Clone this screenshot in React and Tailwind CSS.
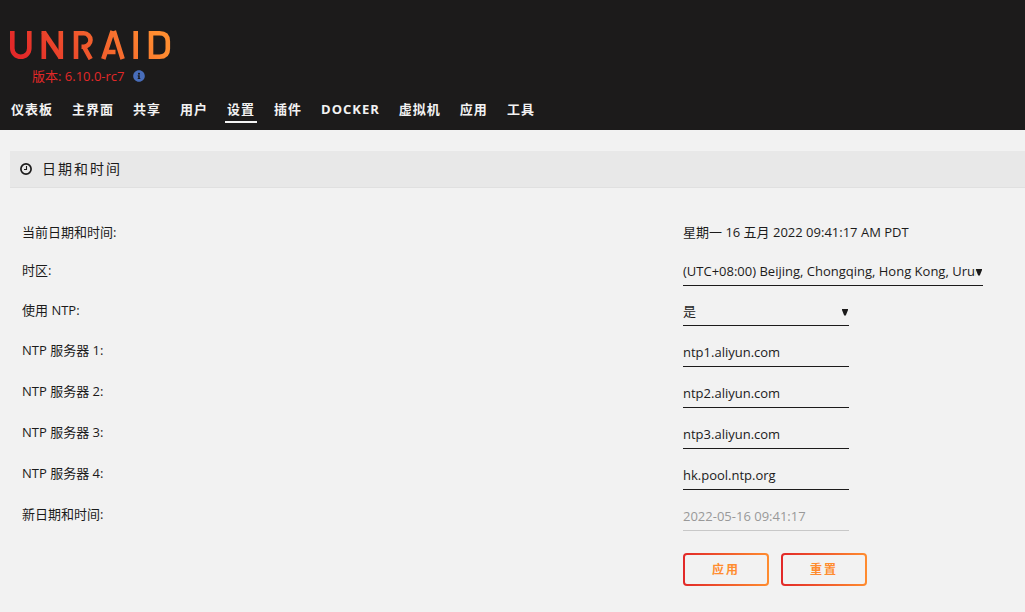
import { FaInfoCircle } from 'react-icons/fa';

const tabs = ['仪表板', '主界面', '共享', '用户', '设置', '插件', 'DOCKER', '虚拟机', '应用', '工具'];

const servers = ['ntp1.aliyun.com', 'ntp2.aliyun.com', 'ntp3.aliyun.com', 'hk.pool.ntp.org'];

const fieldClass = 'block h-[30px] border-b border-[#1c1b1b] bg-transparent text-[13px] outline-none';

function Logo() {
  return (
    <svg width="164" height="30" viewBox="0 0 164 30" fill="none" role="img" aria-label="Unraid">
      <defs>
        <linearGradient id="brand" gradientUnits="userSpaceOnUse" x1="30" y1="50" x2="130" y2="-20">
          <stop offset="0" stopColor="#e32929" />
          <stop offset="1" stopColor="#ff8d30" />
        </linearGradient>
      </defs>
      <g stroke="url(#brand)" strokeWidth="4.6">
        <path d="M3.3 1v17.3a8.5 8.5 0 0 0 17 0V1" />
        <path d="M34.8 29V1M51.8 1v28" />
        <path d="M34.6 2.2L52 27.8" strokeWidth="5" />
        <path d="M67 29V3.3h7.8a6.7 6.7 0 0 1 0 13.4h-2.3M74.5 16L81.7 29" />
        <path d="M94.3 29L103.6 1M113.6 29L104.8 1M97.5 22h9" />
        <path d="M126.7 1v28" />
        <path d="M142 3.3h8.5q8.3 0 8.3 8v7.4q0 8-8.3 8H142z" />
      </g>
    </svg>
  );
}

function ClockIcon() {
  return (
    <svg width="12" height="12" viewBox="0 0 12 12" fill="none" stroke="#1c1b1b" aria-hidden="true">
      <circle cx="6" cy="6" r="5.1" strokeWidth="1.7" />
      <path d="M6.5 3v3.5H4" strokeWidth="1.1" />
    </svg>
  );
}

function Row({ label, id, tall, children }) {
  return (
    <div className={`flex items-end ${tall ? 'h-[41px]' : 'h-10'}`}>
      <label htmlFor={id} className={`flex-1 leading-5 ${tall ? 'pb-[7px]' : 'pb-[6px]'}`}>
        {label}
      </label>
      <div className="w-[342px] shrink-0">{children}</div>
    </div>
  );
}

function Select({ id, width, children }) {
  return (
    <div className={`relative ${width}`}>
      <select id={id} className={`${fieldClass} w-full appearance-none pr-[7px] pt-[2px]`}>
        {children}
      </select>
      <svg className="pointer-events-none absolute right-px top-[13px]" width="6" height="7" viewBox="0 0 6 7" aria-hidden="true">
        <path d="M0 0h6v1L3.8 6.5H2.2L0 1z" fill="#1c1b1b" />
      </svg>
    </div>
  );
}

function GradientButton({ children }) {
  return (
    <button
      type="button"
      className="h-[33px] w-[86px] rounded border-2 border-transparent text-xs font-bold tracking-[2px] text-[#ff8c2f] [background:linear-gradient(#f2f2f2,#f2f2f2)_padding-box,linear-gradient(90deg,#e22828,#ff8c2f)_border-box]"
    >
      {children}
    </button>
  );
}

function App() {
  return (
    <div className="min-h-screen bg-[#f2f2f2] font-['Open_Sans','Noto_Sans_CJK_SC',sans-serif] text-[13px] text-[#1c1b1b]">
      {/* Header */}
      <header className="h-[130px] bg-[#1c1b1b] pt-[30px]">
        <div className="pl-[9px]">
          <a href="#" className="block">
            <Logo />
          </a>
          <div className="flex items-center gap-2 pl-[23px] leading-8 text-[#e22828]">
            <span>版本: 6.10.0-rc7</span>
            <FaInfoCircle className="size-3 text-[#486dba]" />
          </div>
        </div>
        <nav className="flex gap-[15px] pl-[9px] font-bold tracking-[1px] text-[#f2f2f2]">
          {tabs.map((tab) => (
            <a
              key={tab}
              href="#"
              className={`h-[31px] border-b-2 px-[2px] leading-[34px] ${tab === '设置' ? 'border-[#f2f2f2]' : 'border-transparent'}`}
            >
              {tab}
            </a>
          ))}
        </nav>
      </header>

      <main className="pt-[21px]">
        <h1 className="ml-[10px] flex h-[37px] items-center gap-[10px] border-b border-[#e0e0e0] bg-[#e8e8e8] pl-[10px] text-sm tracking-[2px]">
          <ClockIcon />
          日期和时间
        </h1>

        {/* Settings */}
        <form className="pl-[22px] pt-[34px]">
          <div className="flex h-6 leading-5">
            <span className="flex-1">当前日期和时间:</span>
            <span className="w-[342px] shrink-0">星期一 16 五月 2022 09:41:17 AM PDT</span>
          </div>
          <Row label="时区:" id="timezone">
            <Select id="timezone" width="w-[300px]">
              <option>(UTC+08:00) Beijing, Chongqing, Hong Kong, Urumqi</option>
            </Select>
          </Row>
          <Row label="使用 NTP:" id="ntp">
            <Select id="ntp" width="w-[166px]">
              <option>是</option>
              <option>否</option>
            </Select>
          </Row>
          {servers.map((server, i) => (
            <Row key={server} label={`NTP 服务器 ${i + 1}:`} id={`server${i + 1}`} tall>
              <input id={`server${i + 1}`} type="text" defaultValue={server} className={`${fieldClass} w-[166px]`} />
            </Row>
          ))}
          <Row label="新日期和时间:" id="newdate" tall>
            <input
              id="newdate"
              type="text"
              disabled
              defaultValue="2022-05-16 09:41:17"
              className="block h-[30px] w-[166px] border-b border-[#c8c8c8] bg-transparent text-[13px] text-[#999999]"
            />
          </Row>
          <div className="flex pt-[22px]">
            <div className="flex-1" />
            <div className="flex w-[342px] shrink-0 gap-3">
              <GradientButton>应用</GradientButton>
              <GradientButton>重置</GradientButton>
            </div>
          </div>
        </form>
      </main>
    </div>
  );
}

export default App;
